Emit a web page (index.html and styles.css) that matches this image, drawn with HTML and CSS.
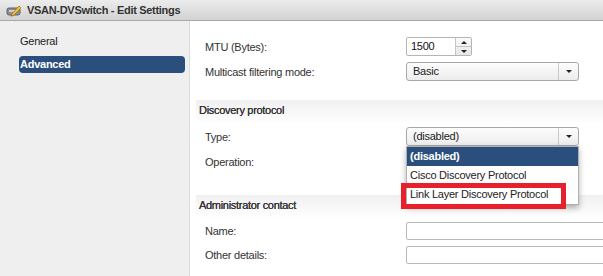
FILE: index.html
```html
<!DOCTYPE html>
<html lang="en">

<head>
    <meta charset="UTF-8">
    <title>VSAN-DVSwitch - Edit Settings</title>
    <link rel="stylesheet" href="styles.css">
</head>

<body>
    <header class="titlebar">
        <svg class="title-icon" width="16" height="14" viewBox="0 0 16 14">
            <rect x="1" y="5" width="13" height="7" rx="2" fill="#8a8f96" stroke="#5d636a" stroke-width="1"/>
            <rect x="3" y="7" width="9" height="2" fill="#c9ccd0"/>
            <path d="M5 12 L13 3 L15 5 L7 13 Z" fill="#f2c12e" stroke="#9a6a10" stroke-width="0.7"/>
            <path d="M5 12 L7 13 L4.5 13.5 Z" fill="#d43a2a"/>
        </svg>
        <h1>VSAN-DVSwitch - Edit Settings</h1>
    </header>
    <div class="dialog">
        <nav class="sidebar">
            <div class="nav-item">General</div>
            <div class="nav-item selected">Advanced</div>
        </nav>
        <main class="content">
            <div class="row first">
                <label>MTU (Bytes):</label>
                <div class="spinner">
                    <span class="spin-value">1500</span>
                    <span class="spin-buttons">
                        <span class="spin-up"><i class="tri-up"></i></span>
                        <span class="spin-down"><i class="tri-down"></i></span>
                    </span>
                </div>
            </div>
            <div class="row">
                <label>Multicast filtering mode:</label>
                <div class="select">
                    <span class="select-value">Basic</span>
                    <span class="select-arrow"><i class="tri-down"></i></span>
                </div>
            </div>

            <h2 class="section">Discovery protocol</h2>
            <div class="row">
                <label>Type:</label>
                <div class="select-wrap">
                    <div class="select">
                        <span class="select-value">(disabled)</span>
                        <span class="select-arrow"><i class="tri-down"></i></span>
                    </div>
                    <ul class="dropdown">
                        <li class="active">(disabled)</li>
                        <li>Cisco Discovery Protocol</li>
                        <li>Link Layer Discovery Protocol</li>
                    </ul>
                    <div class="highlight"></div>
                </div>
            </div>
            <div class="row">
                <label>Operation:</label>
            </div>

            <h2 class="section admin">Administrator contact</h2>
            <div class="row input-row">
                <label>Name:</label>
                <input type="text" class="text-input">
            </div>
            <div class="row input-row">
                <label>Other details:</label>
                <input type="text" class="text-input">
            </div>
        </main>
    </div>
</body>

</html>
```

FILE: styles.css
```css
body {
    margin: 0;
    font-family: "Liberation Sans", Arial, sans-serif;
    font-size: 11px;
    letter-spacing: -0.25px;
    color: #333;
    background-color: #fff;
    overflow: hidden;
}

.titlebar {
    height: 20px;
    display: flex;
    align-items: center;
    padding-left: 6px;
    background: linear-gradient(#ececec, #d2d2d2);
    border-bottom: 1px solid #a9a9a9;
}

.title-icon {
    margin-right: 5px;
}

.titlebar h1 {
    margin: 0;
    font-size: 11px;
    letter-spacing: -0.3px;
    font-weight: bold;
    color: #333;
}

.dialog {
    display: flex;
    height: 255px;
}

/* Left navigation */
.sidebar {
    width: 190px;
    flex-shrink: 0;
    background-color: #efefef;
    border-right: 1px solid #dcdcdc;
    padding-top: 12px;
    box-sizing: border-box;
}

.nav-item {
    margin: 0 4px 0 19px;
    height: 17px;
    line-height: 17px;
    padding-left: 1px;
    color: #222;
}

.nav-item.selected {
    margin-top: 6px;
    background-color: #2b4f7c;
    color: #fff;
    font-weight: bold;
    border-radius: 4px;
}

/* Right content */
.content {
    flex: 1;
    padding: 16px 0 0 5px;
    min-width: 0;
}

.row {
    display: flex;
    align-items: center;
    height: 19px;
    margin-bottom: 6px;
    padding-left: 10px;
}

.row.input-row {
    height: 18px;
}

.row label {
    width: 201px;
    flex-shrink: 0;
}

.spinner {
    display: flex;
    width: 66px;
    height: 19px;
    box-sizing: border-box;
    border: 1px solid #b5b5b5;
    border-radius: 2px;
}

.spin-value {
    flex: 1;
    padding-left: 4px;
    line-height: 17px;
    color: #111;
}

.spin-buttons {
    width: 15px;
    display: flex;
    flex-direction: column;
    border-left: 1px solid #c4c4c4;
    background: linear-gradient(#fafafa, #e6e6e6);
}

.spin-up,
.spin-down {
    flex: 1;
    display: flex;
    align-items: center;
    justify-content: center;
}

.spin-up {
    border-bottom: 1px solid #c4c4c4;
}

.tri-up,
.tri-down {
    width: 0;
    height: 0;
    border-left: 3px solid transparent;
    border-right: 3px solid transparent;
}

.tri-up {
    border-bottom: 3px solid #222;
}

.tri-down {
    border-top: 3px solid #222;
}

.select-wrap {
    position: relative;
}

.select {
    display: flex;
    width: 173px;
    height: 19px;
    box-sizing: border-box;
    border: 1px solid #a8a8a8;
    border-radius: 3px;
    background: linear-gradient(#fdfdfd, #ececec);
}

.select-value {
    flex: 1;
    padding-left: 6px;
    line-height: 17px;
    color: #222;
}

.select-arrow {
    width: 19px;
    display: flex;
    align-items: center;
    justify-content: center;
    border-left: 1px solid #c9c9c9;
}

.section {
    margin: 19px 0 3px 1px;
    height: 24px;
    line-height: 21px;
    padding-left: 3px;
    font-size: 11px;
    font-weight: normal;
    letter-spacing: -0.3px;
    color: #333;
    background: linear-gradient(#f0f0f0, #fff);
    text-shadow: 0 0 0.3px #333;
}

.section.admin {
    margin-top: 24px;
    margin-bottom: 3px;
}

/* Open dropdown list */
.dropdown {
    position: absolute;
    left: 0;
    top: 19px;
    width: 173px;
    margin: 0;
    padding: 0;
    list-style: none;
    box-sizing: border-box;
    background-color: #fff;
    border: 1px solid #b0b0b0;
    box-shadow: 0 3px 6px rgba(0, 0, 0, 0.3);
    z-index: 2;
}

.dropdown li {
    height: 19px;
    line-height: 19px;
    padding-left: 3px;
    color: #222;
}

.dropdown li.active {
    background-color: #2b4f7c;
    color: #fff;
    font-weight: bold;
}

.highlight {
    position: absolute;
    left: -5px;
    top: 56px;
    width: 165px;
    height: 26px;
    box-sizing: border-box;
    border: 5px solid #e8202c;
    z-index: 3;
}

.text-input {
    width: 220px;
    height: 18px;
    box-sizing: border-box;
    border: 1px solid #b8b8b8;
    border-radius: 2px;
    margin: 0;
    flex-shrink: 0;
}
```
